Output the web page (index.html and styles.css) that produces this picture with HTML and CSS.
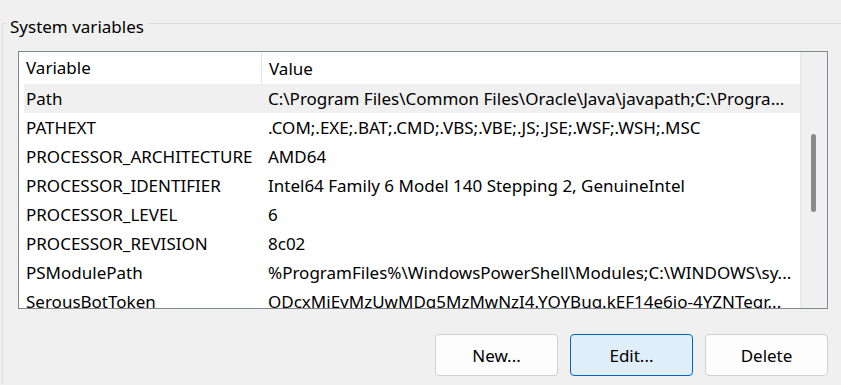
FILE: index.html
```html
<!DOCTYPE html>
<html lang="en">
<head>
    <meta charset="UTF-8">
    <meta name="viewport" content="width=device-width, initial-scale=1.0">
    <title>Environment Variables</title>
    <link rel="stylesheet" href="styles.css">
</head>
<body>
    <fieldset class="group">
        <legend>System variables</legend>

        <div class="listbox">
            <div class="list">
                <div class="row head">
                    <div class="col name">Variable</div>
                    <div class="col value">Value</div>
                </div>
                <div class="row selected">
                    <div class="col name">Path</div>
                    <div class="col value">C:\Program Files\Common Files\Oracle\Java\javapath;C:\Progra...</div>
                </div>
                <div class="row">
                    <div class="col name">PATHEXT</div>
                    <div class="col value">.COM;.EXE;.BAT;.CMD;.VBS;.VBE;.JS;.JSE;.WSF;.WSH;.MSC</div>
                </div>
                <div class="row">
                    <div class="col name">PROCESSOR_ARCHITECTURE</div>
                    <div class="col value">AMD64</div>
                </div>
                <div class="row">
                    <div class="col name">PROCESSOR_IDENTIFIER</div>
                    <div class="col value">Intel64 Family 6 Model 140 Stepping 2, GenuineIntel</div>
                </div>
                <div class="row">
                    <div class="col name">PROCESSOR_LEVEL</div>
                    <div class="col value">6</div>
                </div>
                <div class="row">
                    <div class="col name">PROCESSOR_REVISION</div>
                    <div class="col value">8c02</div>
                </div>
                <div class="row">
                    <div class="col name">PSModulePath</div>
                    <div class="col value">%ProgramFiles%\WindowsPowerShell\Modules;C:\WINDOWS\sy...</div>
                </div>
                <div class="row">
                    <div class="col name">SerousBotToken</div>
                    <div class="col value">ODcxMjEyMzUwMDg5MzMwNzI4.YOYBug.kEF14e6io-4YZNTegr...</div>
                </div>
            </div>
            <div class="scrollbar">
                <div class="thumb"></div>
            </div>
        </div>

        <div class="buttons">
            <button>New...</button>
            <button class="default">Edit...</button>
            <button>Delete</button>
        </div>
    </fieldset>
</body>
</html>
```

FILE: styles.css
```css
body {
    margin: 0;
    padding: 0;
    background-color: #f0f0f0;
    color: #000;
    font-family: "Segoe UI", "Noto Sans", sans-serif;
    font-size: 17px;
    overflow: hidden;
}

.group {
    margin: 9px 0 0 2px;
    padding: 0 0 8px 15px;
    border: 1px solid #dcdcdc;
    border-right: none;
    border-bottom: none;
    min-width: 0;
}

.group legend {
    margin-left: -11px;
    padding: 8px 3px 0 3px;
    line-height: 20px;
}

.listbox {
    display: flex;
    width: 808px;
    height: 256px;
    margin-top: 14px;
    border: 1px solid #828790;
    background-color: #fff;
    overflow: hidden;
}

.list {
    flex: 1;
    padding-left: 5px;
    overflow: hidden;
}

.row {
    display: flex;
    height: 29px;
    align-items: center;
    white-space: nowrap;
}

.row.head {
    height: 32px;
    margin-left: -5px;
    padding-left: 5px;
}

.row.selected {
    background-color: #f0f0f0;
}

.col.name {
    width: 235px;
    padding-left: 2px;
    flex-shrink: 0;
}

.col.value {
    padding-left: 7px;
    overflow: hidden;
}

.row.head .col.name {
    border-right: 1px solid #e5e5e5;
    height: 30px;
    line-height: 30px;
}

.scrollbar {
    width: 27px;
    background-color: #f0f0f0;
    border-left: 1px solid #e5e5e5;
    padding: 82px 0 0 10px;
    box-sizing: border-box;
}

.thumb {
    width: 5px;
    height: 78px;
    border-radius: 3px;
    background-color: #8a8a8a;
}

.buttons {
    display: flex;
    justify-content: flex-end;
    gap: 12px;
    width: 810px;
    margin-top: 25px;
}

.buttons button {
    width: 123px;
    height: 42px;
    font-family: "Segoe UI", "Noto Sans", sans-serif;
    font-size: 17px;
    color: #000;
    background-color: #fdfdfd;
    border: 1px solid #d0d0d0;
    border-radius: 4px;
}

.buttons button.default {
    background-color: #e0eef9;
    border-color: #0067c0;
}
```
